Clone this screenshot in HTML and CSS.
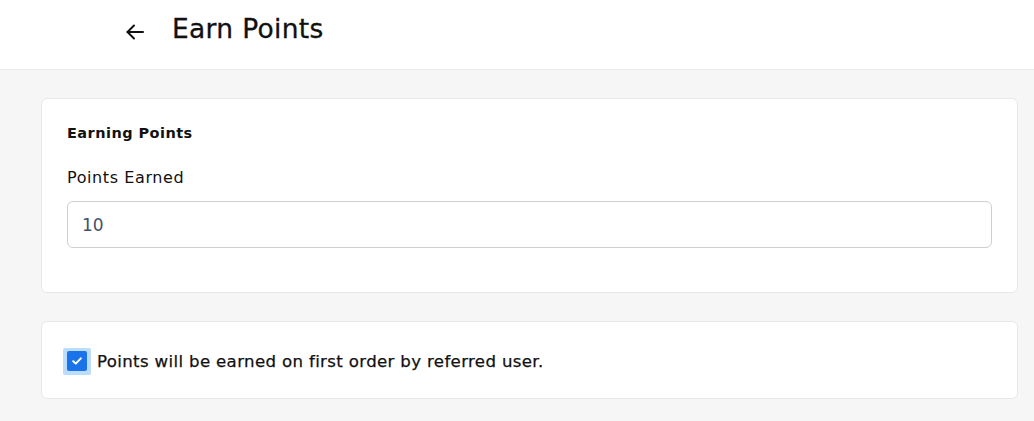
FILE: index.html
```html
<!DOCTYPE html>
<html lang="en">
<head>
<meta charset="utf-8">
<title>Earn Points</title>
<link rel="stylesheet" href="styles.css">
</head>
<body>
<header class="topbar">
  <button class="back" aria-label="Back">
    <svg width="24" height="24" viewBox="0 0 24 24" fill="none" stroke="#111" stroke-width="2" stroke-linecap="round" stroke-linejoin="round"><path d="M20 12H4.5"/><path d="M11 5.5L4.5 12L11 18.5"/></svg>
  </button>
  <h1 class="title">Earn Points</h1>
</header>
<main class="content">
  <section class="card card-form">
    <h2 class="card-title">Earning Points</h2>
    <label class="field-label" for="pts">Points Earned</label>
    <div class="input">10</div>
  </section>
  <section class="card card-check">
    <label class="check-row">
      <span class="checkbox">
        <svg width="10" height="8" viewBox="0 0 10 8"><path d="M1.2 4.2L3.8 6.6L8.8 1.4" fill="none" stroke="#fff" stroke-width="2" stroke-linecap="round" stroke-linejoin="round"/></svg>
      </span>
      <span class="check-text">Points will be earned on first order by referred user.</span>
    </label>
  </section>
</main>
</body>
</html>
```
FILE: styles.css
```css
* { box-sizing: border-box; }
html, body { margin: 0; padding: 0; }
body {
  background: #f6f6f6;
  font-family: "DejaVu Sans", "Noto Sans", sans-serif;
  color: #111;
  width: 1034px;
  height: 421px;
  overflow: hidden;
}
.topbar {
  height: 70px;
  background: #fff;
  border-bottom: 1px solid #ececec;
  display: flex;
  align-items: center;
  padding-left: 122px;
  gap: 24px;
}
.back {
  border: 0;
  background: none;
  padding: 0;
  width: 26px;
  height: 26px;
  display: flex;
  align-items: center;
  justify-content: center;
  margin-top: -6px;
}
.title {
  margin: 0;
  font-size: 26.5px;
  letter-spacing: 0.3px;
  font-weight: 400;
  color: #111;
  margin-top: -12px;
  -webkit-text-stroke: 0.3px #111;
}
.content {
  padding: 28px 16px 0 41px;
  display: flex;
  flex-direction: column;
  gap: 28px;
}
.card {
  background: #fff;
  border: 1px solid #e8e8e8;
  border-radius: 6px;
}
.card-form {
  height: 195px;
  padding: 24px 25px 0 25px;
}
.card-title {
  margin: 0;
  font-size: 14.5px;
  letter-spacing: 0.45px;
  font-weight: 700;
  line-height: 21px;
}
.field-label {
  display: block;
  margin-top: 23px;
  font-size: 16px;
  letter-spacing: 0.6px;
  line-height: 22px;
}
.input {
  margin-top: 12px;
  height: 47px;
  border: 1px solid #cfcfcf;
  border-radius: 6px;
  padding: 0 14px;
  display: flex;
  align-items: center;
  font-size: 17px;
  color: #46506b;
}
.card-check {
  height: 78px;
  padding: 0 21px;
  display: flex;
  align-items: center;
}
.check-row {
  display: flex;
  align-items: center;
  gap: 6px;
  margin-top: 2px;
}
.checkbox {
  width: 28px;
  height: 27px;
  background: #bcdcfb;
  display: flex;
  align-items: center;
  justify-content: center;
  border-radius: 2px;
}
.checkbox svg {
  background: #1a73e8;
  width: 20px;
  height: 20px;
  padding: 6px 5px;
  border-radius: 2px;
}
.check-text {
  font-size: 16.6px;
  letter-spacing: 0.35px;
  -webkit-text-stroke: 0.25px #111;
}
```
